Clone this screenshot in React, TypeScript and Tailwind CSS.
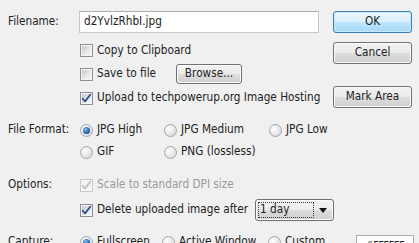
import React from "react";

function CheckBox({ checked = false, disabled = false }: { checked?: boolean; disabled?: boolean }) {
  return (
    <span
      className={`flex h-[13px] w-[13px] shrink-0 items-center justify-center border ${
        disabled ? "border-[#c9c9c9] bg-[#f7f7f7]" : "border-[#8e8f8f] bg-[#f4f4f4]"
      }`}
    >
      <span
        className={`flex h-[9px] w-[9px] items-center justify-center ${
          disabled
            ? "bg-[#f4f4f4]"
            : "bg-[linear-gradient(135deg,#c3c6ca_0%,#e4e5e7_55%,#f6f6f6_100%)]"
        }`}
      >
        {checked && (
          <svg width="11" height="11" viewBox="0 0 11 11" className="overflow-visible">
            <path
              d="M1.6 5.6 L4 8.4 L9.4 1.6"
              fill="none"
              stroke={disabled ? "#c2c2c2" : "#35518f"}
              strokeWidth="1.7"
              strokeLinecap="round"
              strokeLinejoin="round"
            />
          </svg>
        )}
      </span>
    </span>
  );
}

function Radio({ checked = false }: { checked?: boolean }) {
  return (
    <span className="flex h-[13px] w-[13px] shrink-0 items-center justify-center rounded-full border border-[#a3a6aa] bg-[radial-gradient(circle_at_35%_35%,#ffffff_0%,#e6e6e6_55%,#cfd1d4_100%)]">
      {checked && (
        <span className="h-[7px] w-[7px] rounded-full bg-[radial-gradient(circle_at_40%_35%,#8cc4f2_0%,#2e6cb6_50%,#173f78_100%)]" />
      )}
    </span>
  );
}

function Button({
  children,
  className = "",
  primary = false,
}: {
  children: React.ReactNode;
  className?: string;
  primary?: boolean;
}) {
  return (
    <div
      className={`flex items-center justify-center rounded-[3px] border ${
        primary
          ? "border-[#3c7fb1] bg-[linear-gradient(to_bottom,#eaf6fd_0%,#d9f0fc_50%,#bee6fd_51%,#a7d9f5_100%)] shadow-[inset_0_0_0_1px_#c8e8fb]"
          : "border-[#707070] bg-[linear-gradient(to_bottom,#f2f2f2_0%,#ebebeb_50%,#dddddd_51%,#cfcfcf_100%)] shadow-[inset_0_0_0_1px_#fbfbfb]"
      } ${className}`}
    >
      {children}
    </div>
  );
}

function RadioItem({ label, checked = false, className = "" }: { label: string; checked?: boolean; className?: string }) {
  return (
    <div className={`flex items-center ${className}`}>
      <Radio checked={checked} />
      <span className="ml-[4px] whitespace-nowrap">{label}</span>
    </div>
  );
}

export default function App() {
  return (
    <div className="h-[243px] w-[419px] overflow-hidden bg-[#f0f0f0] font-['DejaVu_Sans_Condensed','DejaVu_Sans',sans-serif] text-[11.7px] leading-none text-[#222222]">
      <div className="flex pt-[11px]">
        <div className="flex w-[333px] flex-col">
          <div className="flex h-[22px] items-center">
            <span className="w-[79px] pl-[8px]">Filename:</span>
            <div className="flex h-[22px] w-[240px] items-center border border-[#c5c8ce] border-t-[#abadb3] bg-white pl-[4px]">
              d2YvlzRhbI.jpg
            </div>
          </div>
          <div className="flex flex-col pl-[80px]">
            <div className="mt-[6px] flex h-[23px] items-center">
              <CheckBox />
              <span className="ml-[4px]">Copy to Clipboard</span>
            </div>
            <div className="flex h-[24px] items-center">
              <CheckBox />
              <span className="ml-[4px] w-[79px]">Save to file</span>
              <Button className="h-[20px] w-[66px]">Browse...</Button>
            </div>
            <div className="flex h-[24px] items-center">
              <CheckBox checked />
              <span className="ml-[4px] whitespace-nowrap">Upload to techpowerup.org Image Hosting</span>
            </div>
          </div>
        </div>
        <div className="flex w-[79px] flex-col">
          <Button primary className="h-[22px]">
            OK
          </Button>
          <Button className="mt-[9px] h-[22px]">Cancel</Button>
          <Button className="mt-[22px] h-[22px]">Mark Area</Button>
        </div>
      </div>

      <div className="flex flex-col pl-[8px]">
        <div className="mt-[9px] flex h-[22px] items-center">
          <span className="w-[72px]">File Format:</span>
          <RadioItem label="JPG High" checked className="w-[84px]" />
          <RadioItem label="JPG Medium" className="w-[105px]" />
          <RadioItem label="JPG Low" />
        </div>
        <div className="flex h-[22px] items-center pl-[72px]">
          <RadioItem label="GIF" className="w-[84px]" />
          <RadioItem label="PNG (lossless)" />
        </div>
        <div className="mt-[11px] flex h-[22px] items-center">
          <span className="w-[72px]">Options:</span>
          <CheckBox checked disabled />
          <span className="ml-[4px] text-[#9a9a9a]">Scale to standard DPI size</span>
        </div>
        <div className="mt-[3px] flex h-[22px] items-center pl-[72px]">
          <CheckBox checked />
          <span className="ml-[4px] w-[158px] whitespace-nowrap">Delete uploaded image after</span>
          <div className="flex h-[22px] w-[79px] items-center rounded-[3px] border border-[#707070] bg-[linear-gradient(to_bottom,#f2f2f2_0%,#ebebeb_50%,#dddddd_51%,#cfcfcf_100%)] px-[2px] shadow-[inset_0_0_0_1px_#fbfbfb]">
            <span className="flex h-[16px] w-[56px] items-center border border-dotted border-[#3a3a3a] pl-[1px]">
              1 day
            </span>
            <span className="flex flex-1 items-center justify-center">
              <svg width="8" height="5" viewBox="0 0 8 5">
                <path d="M0 0 H8 L4 5 Z" fill="#111" />
              </svg>
            </span>
          </div>
        </div>
        <div className="mt-[10px] flex h-[22px] items-center">
          <span className="w-[72px]">Capture:</span>
          <RadioItem label="Fullscreen" checked className="w-[82px]" />
          <RadioItem label="Active Window" className="w-[106px]" />
          <RadioItem label="Custom" className="w-[88px]" />
          <div className="mt-[4px] flex h-[22px] w-[58px] items-start justify-center self-start border border-[#abadb3] bg-white pt-[4px] text-[10.5px] tracking-[-0.2px]">
            #FFFFFF
          </div>
        </div>
      </div>
    </div>
  );
}
